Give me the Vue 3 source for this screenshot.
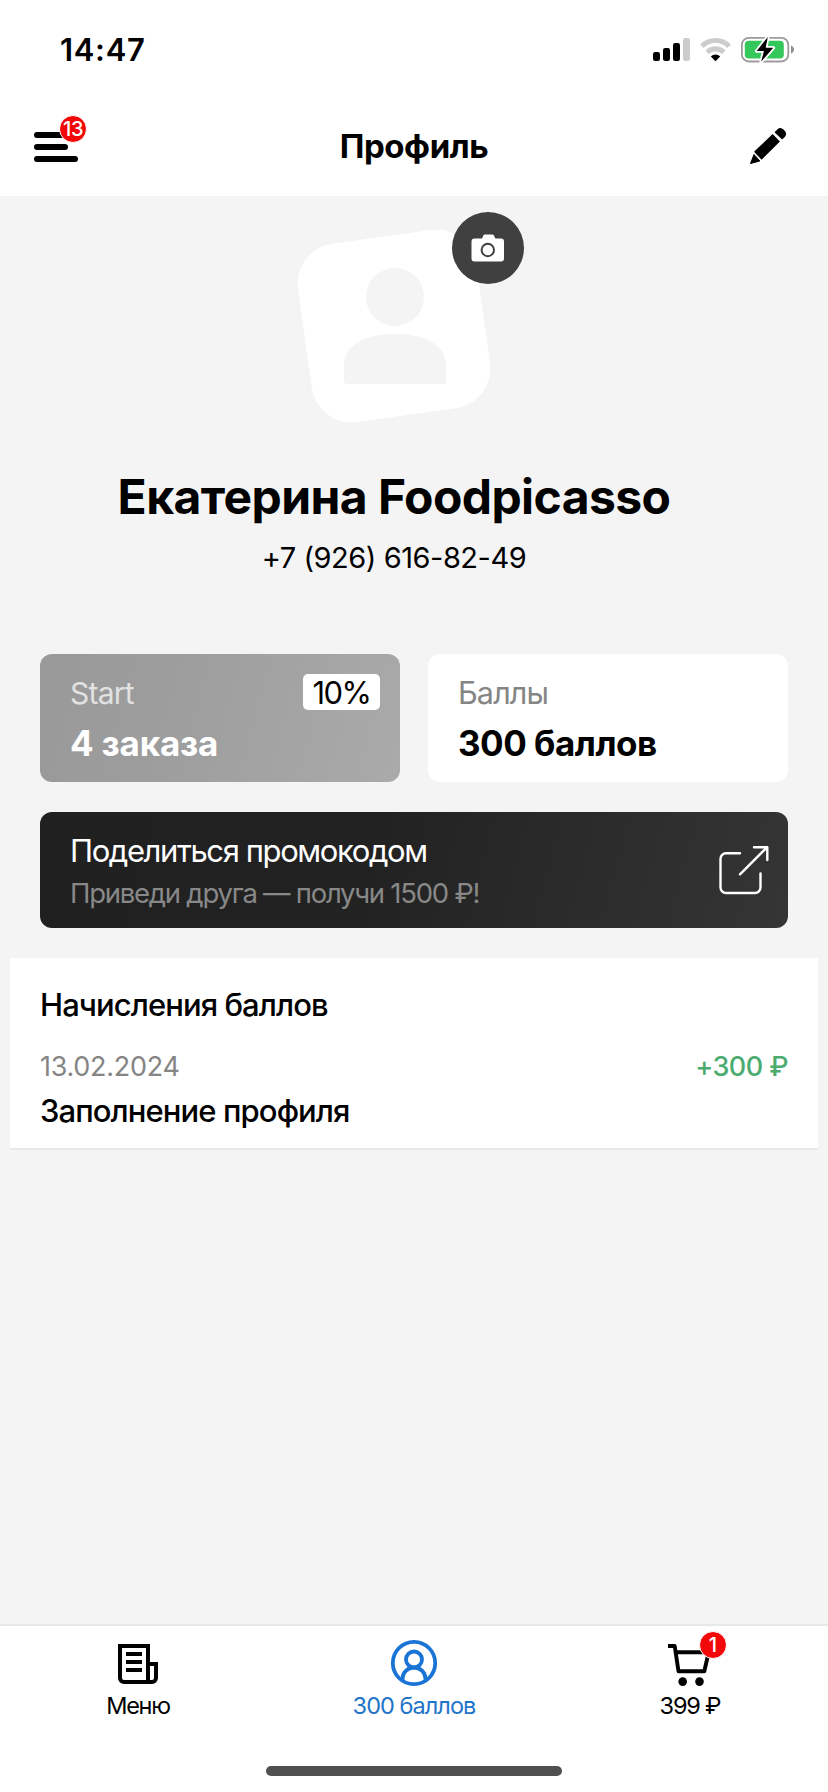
<script setup>
const profile = { name: 'Екатерина Foodpicasso', phone: '+7 (926) 616-82-49' }
const transactions = [{ date: '13.02.2024', amount: '+300 ₽', title: 'Заполнение профиля' }]
</script>

<template>
  <div class="screen">
    <div class="status">
      <span class="time">14:47</span>
      <svg class="indicators" width="142" height="28" viewBox="652 36 142 28">
        <rect x="653" y="52" width="7" height="9" rx="2.2" />
        <rect x="663" y="48" width="7" height="13" rx="2.2" />
        <rect x="673" y="43" width="7" height="18" rx="2.2" />
        <rect x="683" y="38" width="7" height="23" rx="2.2" fill="#ccc" />
        <g fill="none" stroke="#ccc" stroke-width="5">
          <path d="M701.8 46.2a19.6 19.6 0 0 1 27.4 0" />
          <path d="M707.2 52.2a12 12 0 0 1 16.6 0" />
        </g>
        <path d="M715.5 61.2l-4.7-4.7a6.8 6.8 0 0 1 9.4 0z" />
        <rect x="741.9" y="37.9" width="46.4" height="23.6" rx="7" fill="#fff" stroke="#9b9b9b" stroke-width="1.8" />
        <rect x="744.8" y="40.8" width="39" height="17.6" rx="4" fill="#34c759" />
        <path d="M791 45.5c2 .9 3 2.300 3 4s-1 3.200-3 4z" fill="#8d8d8d" />
        <path d="M767.800 36.900L756.700 51h7.200l-2.700 10.700L773.300 47.800h-7.600z" stroke="#fff" stroke-width="3.600" paint-order="stroke" stroke-linejoin="round" />
      </svg>
    </div>

    <header class="navbar">
      <div class="burger">
        <i class="bar"></i><i class="bar short"></i><i class="bar"></i>
        <span class="badge">13</span>
      </div>
      <h1 class="title">Профиль</h1>
      <svg class="pencil" width="38" height="38" viewBox="749 127 38 38">
        <path d="M750.500 163.500l3.500-9 5.800 6.500z" stroke="#000" stroke-width="1" stroke-linejoin="round" />
        <path d="M754 151.800L772.600 134l7.300 7.600L761.600 159.700z" />
        <path d="M774.500 132.300l2.800-2.800a4.500 4.500 0 0 1 6.200.1l1.400 1.500a4.500 4.500 0 0 1-.1 5.800l-2.700 2.700z" />
      </svg>
    </header>

    <main class="content">
      <section class="user">
        <div class="avatar">
          <svg class="person" width="104" height="118" viewBox="343 267 104 118">
            <circle cx="395" cy="297" r="29" />
            <path d="M344 366C344 344 366 334 395 334S446 344 446 366V380.500a3.500 3.500 0 0 1-3.500 3.500H347.500a3.500 3.500 0 0 1-3.500-3.500z" />
          </svg>
          <div class="camera">
            <svg width="34" height="28" viewBox="0 0 34 28">
              <path d="M4 4.500h7l1.600-3.500Q13 .5 13.700.5h7.800q.7 0 1.100.5l1.800 3.500H30a3 3 0 0 1 3 3V24.500a3 3 0 0 1-3 3H3.500a3 3 0 0 1-3-3V7.500a3 3 0 0 1 3-3z" fill="#fff" />
              <circle cx="16.800" cy="16" r="6.200" fill="#fff" stroke="#404040" stroke-width="2" />
            </svg>
          </div>
        </div>
        <div class="name">{{ profile.name }}</div>
        <div class="phone">{{ profile.phone }}</div>
      </section>

      <section class="cards">
        <div class="card level">
          <div class="row"><span class="label start">Start</span><span class="percent">10%</span></div>
          <div class="value orders">4 заказа</div>
        </div>
        <div class="card points">
          <div class="row"><span class="label">Баллы</span></div>
          <div class="value">300 баллов</div>
        </div>
      </section>

      <section class="promo">
        <div>
          <div class="promo-title">Поделиться промокодом</div>
          <div class="promo-text">Приведи друга — получи 1500 ₽!</div>
        </div>
        <svg width="52" height="52" viewBox="718 844 52 52" fill="none" stroke="#fff" stroke-width="2.400" stroke-linecap="round" stroke-linejoin="round">
          <path d="M740 853.300H726a5.500 5.500 0 0 0-5.500 5.500V887.500a5.500 5.500 0 0 0 5.500 5.500H755a5.500 5.500 0 0 0 5.500-5.500V873.500M740 874.300L766.500 847.800M754 847.300H767.300V860" />
        </svg>
      </section>

      <section class="history">
        <h2 class="history-title">Начисления баллов</h2>
        <div v-for="t in transactions" :key="t.date">
          <div class="history-row"><span class="date">{{ t.date }}</span><span class="amount">{{ t.amount }}</span></div>
          <div class="reason">{{ t.title }}</div>
        </div>
      </section>
    </main>

    <footer class="bottom">
      <nav class="tabs">
        <div class="tab">
          <div class="icon">
            <svg width="54" height="54" viewBox="-7 -11 54 54" fill="none" stroke="#000" stroke-width="4">
              <path d="M30 38V2H2V34a4 4 0 0 0 4 4H34a4 4 0 0 0 4-4V20H30M8 10H24M8 18H24M8 26H24" />
            </svg>
          </div>
          <span class="menu-text">Меню</span>
        </div>
        <div class="tab active">
          <div class="icon">
            <svg width="54" height="54" viewBox="386 1633 54 54" fill="none" stroke="#1a74d6" stroke-width="3.800">
              <circle cx="413" cy="1663" r="21.200" />
              <circle cx="413" cy="1659.500" r="8" />
              <path d="M401.500 1680.500V1679c0-6.500 5-11.500 11.500-11.500s11.500 5 11.500 11.500V1680.500" />
            </svg>
          </div>
          <span class="points-text">300 баллов</span>
        </div>
        <div class="tab">
          <div class="icon">
            <svg width="54" height="54" viewBox="663 1633 54 54">
              <path d="M668 1646H674.700L678.500 1671.300H704.300L708.700 1652.300H676" fill="none" stroke="#000" stroke-width="3.900" stroke-linejoin="round" />
              <circle cx="682.700" cy="1681.600" r="4.300" />
              <circle cx="699.500" cy="1681.600" r="4.300" />
            </svg>
            <span class="badge cart-badge">1</span>
          </div>
          <span class="cart-text">399 ₽</span>
        </div>
      </nav>
      <div class="home"></div>
    </footer>
  </div>
</template>

<style>
body { background: #fff; }
</style>

<style scoped>
.screen { width: 828px; height: 1792px; display: flex; flex-direction: column; overflow: hidden; background: #f4f4f4; color: #000; font-family: Inter, "Open Sans", sans-serif; white-space: nowrap; }
.screen svg { display: block; flex: none; }
.status { height: 100px; box-sizing: border-box; display: flex; justify-content: space-between; align-items: center; padding: 0 34px 0 60px; background: #fff; }
.time { font-size: 31px; font-weight: 600; line-height: 100px; letter-spacing: 0.68px; }
.navbar { height: 96px; box-sizing: border-box; display: flex; justify-content: space-between; align-items: center; padding: 0 41px 4px 34px; background: #fff; }
.burger { position: relative; width: 45px; display: flex; flex-direction: column; gap: 6px; padding-top: 2px; }
.bar { width: 44px; height: 6px; border-radius: 3px; background: #000; }
.short { width: 34px; }
.badge { position: absolute; left: 25px; top: -15px; width: 26px; height: 26px; border: 1px solid #fff; border-radius: 50%; background: #f20808; color: #fff; font-size: 20px; font-weight: 500; line-height: 26px; text-align: center; letter-spacing: -0.3px; }
.title { margin: 0; font-size: 33px; font-weight: 700; line-height: 40px; letter-spacing: -0.44px; }
.content { flex: 1; }
.user { box-sizing: border-box; height: 458px; width: 788px; padding-top: 40px; display: flex; flex-direction: column; align-items: center; }
.avatar { position: relative; width: 180px; height: 180px; margin-bottom: 51px; flex: none; }
.avatar::before { content: ""; position: absolute; inset: 0; border-radius: 40px; background: #fff; transform: rotate(-8deg); }
.person { position: absolute; left: 39px; top: 31px; fill: #f4f4f4; }
.camera { position: absolute; left: 148px; top: -24px; width: 72px; height: 72px; border-radius: 50%; background: #404040; display: flex; align-items: center; justify-content: center; }
.camera svg { margin-top: -1px; }
.name { font-size: 48px; font-weight: 700; line-height: 60px; letter-spacing: -0.59px; }
.phone { margin-top: 11px; font-size: 29px; line-height: 39px; letter-spacing: -0.46px; }
.cards { display: flex; gap: 28px; margin: 0 40px; }
.card { flex: 1; box-sizing: border-box; height: 128px; padding: 20px 20px 0 30px; border-radius: 12px; background: #fff; }
.level { background: linear-gradient(105deg, #999 0%, #9d9d9d 35%, #aaa 100%); color: #fff; }
.row { display: flex; justify-content: space-between; height: 37px; }
.label { font-size: 30.5px; line-height: 37px; letter-spacing: -0.85px; color: #858585; }
.start { line-height: 38px; font-size: 30px; letter-spacing: -0.75px; color: #e2e2e2; }
.percent { width: 77px; height: 36px; border-radius: 5px; background: #fff; color: #000; font-size: 31px; line-height: 37px; letter-spacing: -1.58px; text-align: center; }
.value { margin-top: 7px; font-size: 35px; font-weight: 700; line-height: 50px; letter-spacing: -0.5px; }
.orders { letter-spacing: -0.19px; }
.promo { box-sizing: border-box; height: 116px; margin: 30px 40px; padding: 18px 18px 0 30px; border-radius: 12px; background: linear-gradient(105deg, #202020 0%, #222 45%, #353535 100%); display: flex; justify-content: space-between; align-items: flex-start; }
.promo svg { margin-top: 14px; }
.promo-title { font-size: 31px; line-height: 42px; letter-spacing: -1.4px; color: #fff; }
.promo-text { font-size: 27.5px; line-height: 42px; letter-spacing: -1.25px; color: #888; }
.history { box-sizing: border-box; height: 192px; margin: 0 10px; padding: 27px 30px 0; background: #fff; border-bottom: 2px solid #e8e8e8; }
.history-title { margin: 0 0 23px; font-size: 31px; font-weight: 500; line-height: 40px; letter-spacing: -0.93px; }
.history-row { display: flex; justify-content: space-between; line-height: 38px; font-size: 27px; }
.date { letter-spacing: -0.28px; color: #858585; }
.amount { font-weight: 500; letter-spacing: -0.55px; color: #4cac6f; }
.reason { margin-top: 5px; font-size: 31px; font-weight: 500; line-height: 40px; letter-spacing: -0.91px; }
.bottom { height: 168px; box-sizing: border-box; border-top: 2px solid #e8e8e8; background: #fff; }
.tabs { display: grid; grid-template-columns: repeat(3, 1fr); height: 140px; box-sizing: border-box; padding-top: 7px; }
.tab { display: flex; flex-direction: column; align-items: center; font-size: 23.5px; line-height: 36px; }
.icon { position: relative; height: 55px; }
.cart-badge { left: 36px; top: -2px; letter-spacing: 0; }
.menu-text { letter-spacing: -1.27px; }
.points-text { letter-spacing: -0.95px; }
.cart-text { letter-spacing: -1.19px; }
.active { color: #1f74c8; }
.home { width: 296px; height: 10px; margin: 0 auto; border-radius: 5px; background: #505050; }
</style>
